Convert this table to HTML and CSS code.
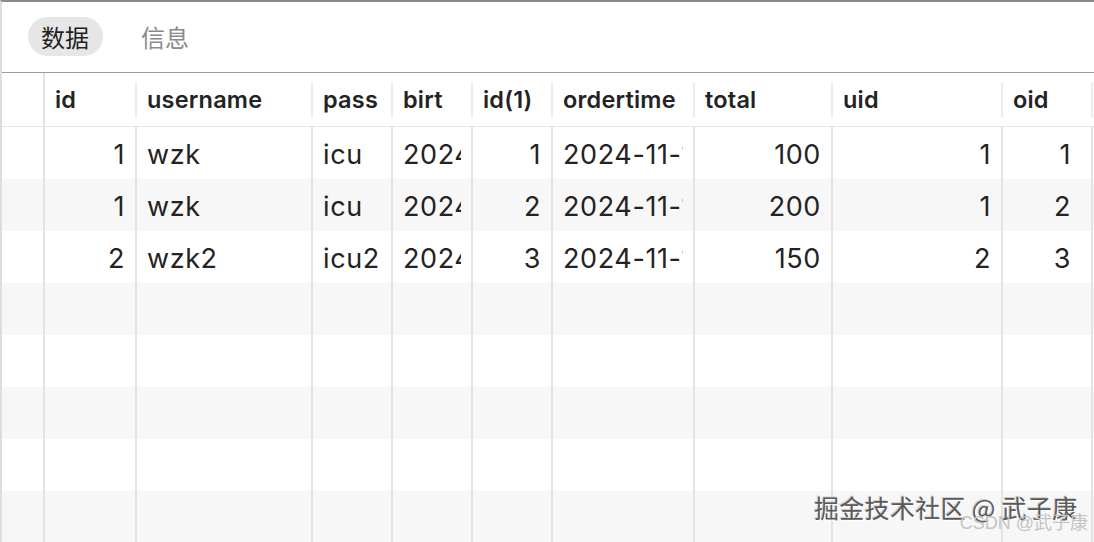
FILE: index.html
```html
<!DOCTYPE html>
<html lang="zh">
<head>
<meta charset="utf-8">
<title>数据</title>
<link rel="stylesheet" href="styles.css">
</head>
<body>
<div class="page">
  <div class="tabs">
    <span class="tab active">数据</span>
    <span class="tab">信息</span>
  </div>
  <div class="grid">
    <div class="row head">
      <div class="c rn"></div>
      <div class="c full"><div class="t">id</div></div>
      <div class="c"><div class="t">username</div></div>
      <div class="c"><div class="t">pass</div></div>
      <div class="c"><div class="t">birt</div></div>
      <div class="c"><div class="t">id(1)</div></div>
      <div class="c"><div class="t">ordertime</div></div>
      <div class="c"><div class="t">total</div></div>
      <div class="c"><div class="t">uid</div></div>
      <div class="c"><div class="t">oid</div></div>
      <div class="c"></div>
    </div>
    <div class="row">
      <div class="c rn"></div>
      <div class="c num"><div class="t">1</div></div>
      <div class="c"><div class="t">wzk</div></div>
      <div class="c"><div class="t">icu</div></div>
      <div class="c"><div class="t">2024-11-15</div></div>
      <div class="c num"><div class="t">1</div></div>
      <div class="c"><div class="t">2024-11-15 10:00:00</div></div>
      <div class="c num"><div class="t">100</div></div>
      <div class="c num"><div class="t">1</div></div>
      <div class="c num last"><div class="t">1</div></div>
      <div class="c"></div>
    </div>
    <div class="row alt">
      <div class="c rn"></div>
      <div class="c num"><div class="t">1</div></div>
      <div class="c"><div class="t">wzk</div></div>
      <div class="c"><div class="t">icu</div></div>
      <div class="c"><div class="t">2024-11-15</div></div>
      <div class="c num"><div class="t">2</div></div>
      <div class="c"><div class="t">2024-11-15 11:00:00</div></div>
      <div class="c num"><div class="t">200</div></div>
      <div class="c num"><div class="t">1</div></div>
      <div class="c num last"><div class="t">2</div></div>
      <div class="c"></div>
    </div>
    <div class="row">
      <div class="c rn"></div>
      <div class="c num"><div class="t">2</div></div>
      <div class="c"><div class="t">wzk2</div></div>
      <div class="c"><div class="t">icu2</div></div>
      <div class="c"><div class="t">2024-11-15</div></div>
      <div class="c num"><div class="t">3</div></div>
      <div class="c"><div class="t">2024-11-15 12:00:00</div></div>
      <div class="c num"><div class="t">150</div></div>
      <div class="c num"><div class="t">2</div></div>
      <div class="c num last"><div class="t">3</div></div>
      <div class="c"></div>
    </div>
    <div class="row alt"><div class="c rn"></div><div class="c"></div><div class="c"></div><div class="c"></div><div class="c"></div><div class="c"></div><div class="c"></div><div class="c"></div><div class="c"></div><div class="c"></div><div class="c"></div></div>
    <div class="row"><div class="c rn"></div><div class="c"></div><div class="c"></div><div class="c"></div><div class="c"></div><div class="c"></div><div class="c"></div><div class="c"></div><div class="c"></div><div class="c"></div><div class="c"></div></div>
    <div class="row alt"><div class="c rn"></div><div class="c"></div><div class="c"></div><div class="c"></div><div class="c"></div><div class="c"></div><div class="c"></div><div class="c"></div><div class="c"></div><div class="c"></div><div class="c"></div></div>
    <div class="row"><div class="c rn"></div><div class="c"></div><div class="c"></div><div class="c"></div><div class="c"></div><div class="c"></div><div class="c"></div><div class="c"></div><div class="c"></div><div class="c"></div><div class="c"></div></div>
    <div class="row alt"><div class="c rn"></div><div class="c"></div><div class="c"></div><div class="c"></div><div class="c"></div><div class="c"></div><div class="c"></div><div class="c"></div><div class="c"></div><div class="c"></div><div class="c"></div></div>
  </div>
  <div class="wm">
    <div class="wm-main">掘金技术社区 @ 武子康</div>
    <div class="wm-sub">CSDN @武子康</div>
  </div>
</div>
</body>
</html>
```

FILE: styles.css
```css
* { box-sizing: border-box; }
html, body {
  margin: 0;
  padding: 0;
  background: #ffffff;
}
body {
  width: 1094px;
  height: 542px;
  overflow: hidden;
  font-family: Inter, "Noto Sans CJK SC", sans-serif;
  color: #232323;
}
.page {
  position: relative;
  height: 542px;
  border-top: 2px solid #8c8c8c;
  border-left: 2px solid #dddddd;
  overflow: hidden;
}
.tabs {
  height: 71px;
  display: flex;
  align-items: center;
  gap: 25px;
  padding: 0 0 2px 26px;
  border-bottom: 1px solid #9c9c9c;
}
.tab {
  font-family: "Noto Sans CJK SC", sans-serif;
  font-size: 24px;
  line-height: 39px;
  height: 39px;
  padding: 0 14px 0 13px;
  border-radius: 20px;
  color: #8a8a8a;
}
.tab.active {
  background: #e6e6e6;
  color: #1f1f1f;
}
.grid {
  display: flex;
  flex-direction: column;
}
.row {
  display: grid;
  grid-template-columns: 41px 92px 176px 80px 80px 80px 142px 138px 170px 90px 1fr;
  height: 52px;
  font-size: 27px;
  letter-spacing: 0.6px;
}
.row.alt { background: #f7f7f7; }
.row.head {
  height: 54px;
  border-bottom: 1px solid #e6e6e6;
  font-size: 23.5px;
  letter-spacing: 0.2px;
  font-weight: 600;
  align-items: center;
}
.c {
  border-left: 2px solid #e3e3e3;
  padding: 2px 10px 0 10px;
  display: flex;
  align-items: center;
  min-width: 0;
}
.c.rn { border-left: none; }
.c.last { padding-right: 20px; }
.row.head .c {
  height: 36px;
  padding-top: 0;
  border-left-color: #ececec;
}
.row.head .c.rn { height: 53px; }
.row.head .c.full {
  height: 53px;
  border-left-color: #e3e3e3;
}
.c.num { justify-content: flex-end; }
.t {
  overflow: hidden;
  white-space: nowrap;
  min-width: 0;
}
.wm {
  position: absolute;
  right: 4px;
  bottom: 6px;
  width: 276px;
  height: 44px;
}
.wm-main {
  position: absolute;
  left: 0;
  top: -3px;
  font-family: "Noto Sans CJK SC", sans-serif;
  font-size: 25px;
  letter-spacing: 0.3px;
  color: #5a5a5a;
  text-shadow: 1px 1px 0 #ffffff, -1px -1px 0 #d0d0d0;
  white-space: nowrap;
}
.wm-sub {
  position: absolute;
  right: 2px;
  top: 16px;
  font-family: "Liberation Sans", "Noto Sans CJK SC", sans-serif;
  font-size: 18px;
  color: #c4c4c4;
  white-space: nowrap;
}
```
